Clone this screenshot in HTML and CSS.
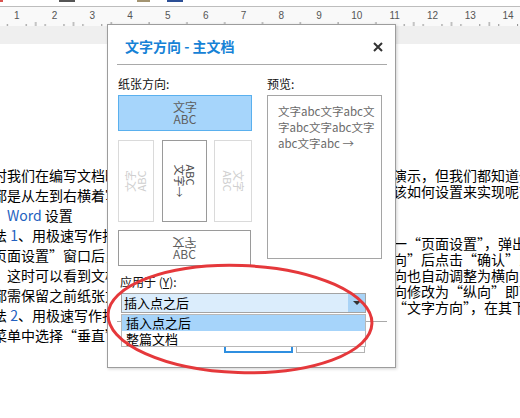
FILE: index.html
```html
<!DOCTYPE html>
<html lang="zh-CN">
<head>
<meta charset="utf-8">
<title>文字方向 - 主文档</title>
<link rel="stylesheet" href="styles.css">
</head>
<body>
<div class="app">
  <div class="toolbar-edge">
    <span class="mark mark-red"></span>
    <span class="mark mark-gray"></span>
    <span class="mark mark-tan"></span>
    <span class="mark mark-blue"></span>
  </div>
  <div class="ruler">
    <div class="ruler-nums">
      <span>1</span><span>2</span><span>3</span><span>4</span><span>5</span><span>6</span><span>7</span><span>8</span><span>9</span><span>10</span><span>11</span><span>12</span><span>13</span><span>14</span>
    </div>
    <svg class="ticks" width="520" height="4" viewBox="0 0 520 4">
      <defs>
        <pattern id="tk" x="16.7" y="0" width="37.8" height="4" patternUnits="userSpaceOnUse">
          <rect x="9" y="2" width="1" height="2" fill="#8c8c8c"/>
          <rect x="18.5" y="0" width="1" height="4" fill="#8c8c8c"/>
          <rect x="28" y="2" width="1" height="2" fill="#8c8c8c"/>
        </pattern>
      </defs>
      <rect width="520" height="4" fill="url(#tk)"/>
    </svg>
  </div>
  <div class="page-top"></div>
  <div class="doc">
    <div class="col-left">
      <div class="line">时我们在编写文档时，需要</div>
      <div class="line">都是从左到右横着写的，</div>
      <div class="line indent"><span class="blue">Word</span> 设置</div>
      <div class="line">法 <span class="blue">1</span>、用极速写作打开</div>
      <div class="line">页面设置”窗口后，选择</div>
      <div class="line">。这时可以看到文档的</div>
      <div class="line">都需保留之前纸张方向</div>
      <div class="line">法 <span class="blue">2</span>、用极速写作打开</div>
      <div class="line">菜单中选择“垂直”</div>
    </div>
    <div class="col-right">
      <div class="rpara">
        <div class="rline">演示，但我们都知道一般</div>
        <div class="rline">该如何设置来实现呢？</div>
      </div>
      <div class="rpara rpara-2">
        <div class="rline">一“页面设置”，弹出“页</div>
        <div class="rline">向”后点击“确认”即可</div>
        <div class="rline">向也自动调整为横向了</div>
        <div class="rline">向修改为“纵向”即可。</div>
        <div class="rline">“文字方向”，在其下拉</div>
      </div>
    </div>
  </div>

  <div class="dialog">
    <div class="dlg-head">
      <span class="dlg-title">文字方向 - 主文档</span>
      <svg class="dlg-close" width="10" height="10" viewBox="0 0 10 10"><path d="M1 1L9 9M9 1L1 9" stroke="#333" stroke-width="2" fill="none"/></svg>
    </div>
    <div class="dlg-sep"></div>
    <div class="dlg-body">
      <div class="col-orient">
        <div class="lbl">纸张方向:</div>
        <div class="opt opt-main"><span class="opt-text">文字<br>ABC</span></div>
        <div class="opt-row">
          <div class="opt opt-v1 disabled"><span class="rot rot-ccw">文字<br>ABC</span></div>
          <div class="opt opt-v2"><span class="rot rot-cw rot-left">ABC<br>文字→</span></div>
          <div class="opt opt-v3 disabled"><span class="rot rot-cw">文字<br>ABC</span></div>
        </div>
        <div class="opt opt-bottom"><span class="opt-text"><span class="flip">文字</span><br>ABC</span></div>
      </div>
      <div class="col-preview">
        <div class="lbl">预览:</div>
        <div class="preview">文字abc文字abc文<br>字abc文字abc文字<br>abc文字abc →</div>
      </div>
    </div>
    <div class="lbl apply-lbl">应用于 (<u>Y</u>):</div>
    <div class="select">
      <span class="select-val">插入点之后</span>
      <span class="select-btn"><svg width="8" height="4" viewBox="0 0 8 4"><polygon points="0,0 8,0 4,4" fill="#333"/></svg></span>
      <ul class="dropdown">
        <li class="hl">插入点之后</li>
        <li>整篇文档</li>
      </ul>
    </div>
    <div class="dlg-sep sep2"></div>
    <div class="btns">
      <button class="btn primary">确定</button>
      <button class="btn">取消</button>
    </div>
  </div>

  <svg class="annot" width="520" height="418" viewBox="0 0 520 418">
    <ellipse cx="240" cy="319" rx="132" ry="53.5" transform="rotate(2 240 319)" fill="none" stroke="#e5383b" stroke-width="3"/>
  </svg>
</div>
</body>
</html>
```
FILE: styles.css
```css
* { box-sizing: border-box; }
html, body { margin: 0; padding: 0; background: #fff; }
body { font-family: "Noto Sans CJK SC", "Noto Sans", sans-serif; color: #000; }

.app { position: relative; width: 520px; height: 418px; overflow: hidden; background: #fff; }

/* top toolbar edge */
.toolbar-edge { height: 7px; display: flex; align-items: flex-start; border-bottom: 1px solid #bdbdbd; }
.mark { display: block; height: 2px; }
.mark-red { width: 3px; background: #d9534f; }
.mark-gray { width: 16px; margin-left: 56px; background: #555; }
.mark-tan { width: 13px; margin-left: 62px; background: #a39471; }
.mark-blue { width: 16px; margin-left: 17px; background: #2c4f96; }

/* ruler */
.ruler { height: 19px; background: #f9f9f9; padding-top: 3px; }
.ruler-nums { display: flex; margin-left: -2.2px; height: 12px; font: 10px/12px "Liberation Sans", sans-serif; color: #555; }
.ruler-nums span { flex: 0 0 37.8px; text-align: center; }
.ticks { display: block; }
.page-top { height: 18px; background: #efefef; }

/* document body */
.doc { display: flex; justify-content: space-between; height: 374px; }
.col-left { width: 110px; overflow: hidden; padding-top: 121px; font-size: 14px; line-height: 20px; }
.line { white-space: nowrap; margin-left: -7px; }
.line.indent { margin-left: 7px; }
.blue { color: #2361c0; }
.col-right { width: 127px; overflow: hidden; padding-top: 123px; font-size: 14px; line-height: 16px; }
.rline { white-space: nowrap; }
.rpara-2 { margin-top: 36px; }

/* dialog */
.dialog { position: absolute; left: 107px; top: 24px; width: 289px; height: 344px; background: #fff;
  border: 1px solid #9d9d9d; box-shadow: 1px 1px 3px rgba(0,0,0,0.18); padding: 0 8px 0 9px; font-size: 12px; z-index: 3; }
.dlg-head { display: flex; justify-content: space-between; align-items: center; margin-top: 12px; height: 19px; padding: 0 4px 0 8px; }
.dlg-title { font-size: 14px; font-weight: 700; color: #1682d6; line-height: 19px; white-space: nowrap; }
.dlg-close { display: block; }
.dlg-sep { height: 1px; background: #a9a9a9; margin-top: 8px; }

.dlg-body { display: grid; grid-template-columns: 134px 115px; column-gap: 15px; padding: 11px 0 0 1px; }
.lbl { font-size: 12px; line-height: 16px; color: #111; white-space: nowrap; }

.opt { border: 1px solid #dadada; display: flex; align-items: center; justify-content: center; color: #5e5e5e;
  font-size: 12px; line-height: 12.5px; text-align: center; }
.opt-main { height: 36px; margin-top: 3px; background: #a6d5fb; border-color: #5ab0ee; }
.opt-row { display: flex; justify-content: space-between; margin-top: 9px; height: 82px; }
.opt-v1 { width: 36px; }
.opt-v2 { width: 45px; border-color: #9a9a9a; }
.opt-v3 { width: 38px; }
.opt.disabled { color: #cfcfcf; }
.opt-bottom { width: 133px; height: 36px; margin-top: 8px; border-color: #9a9a9a; }
.opt-text { display: inline-block; }
.flip { display: inline-block; transform: scaleY(-1); }

.rot { display: inline-block; white-space: nowrap; font-size: 11px; line-height: 11px; }
.rot-ccw { transform: rotate(-90deg); }
.rot-cw { transform: rotate(90deg); }
.rot-left { text-align: left; color: #4a4a4a; }

.preview { margin-top: 3px; height: 164px; border: 1px solid #a5a5a5; padding: 7px 0 0 10px;
  font-size: 11.5px; line-height: 16px; color: #6a6a6a; white-space: nowrap; }

.apply-lbl { margin: 8px 0 0 3px; }
.select { position: relative; margin: 3px 0 0 4px; width: 245px; height: 20px; border: 1px solid #a3a3a3;
  background: #dbedfc; display: flex; align-items: center; }
.select-val { flex: 1; padding-left: 2px; font-size: 13px; line-height: 18px; }
.select-btn { width: 17px; height: 18px; background: #a9d3f6; display: flex; align-items: center; justify-content: center; }
.select-btn svg { display: block; }
.dropdown { position: absolute; top: 20px; left: -1px; width: 245px; margin: 0; padding: 0; list-style: none;
  background: #fff; border: 1px solid #b8b8b8; z-index: 4; }
.dropdown li { height: 16px; line-height: 16px; padding-left: 4px; font-size: 13px; white-space: nowrap; }
.dropdown li + li { height: 15px; line-height: 15px; }
.dropdown li.hl { background: #a6d4fa; }

.sep2 { margin-top: 8px; }
.btns { display: flex; justify-content: flex-end; gap: 3px; margin-top: 5px; padding-right: 22px; }
.btn { width: 69px; height: 26px; background: #fff; border: 1px solid #b3b3b3; padding: 0;
  font: 12px "Noto Sans CJK SC", sans-serif; color: #333; }
.btn.primary { border: 2px solid #2f8fe0; }

.annot { position: absolute; left: 0; top: 0; pointer-events: none; z-index: 6; }
```
